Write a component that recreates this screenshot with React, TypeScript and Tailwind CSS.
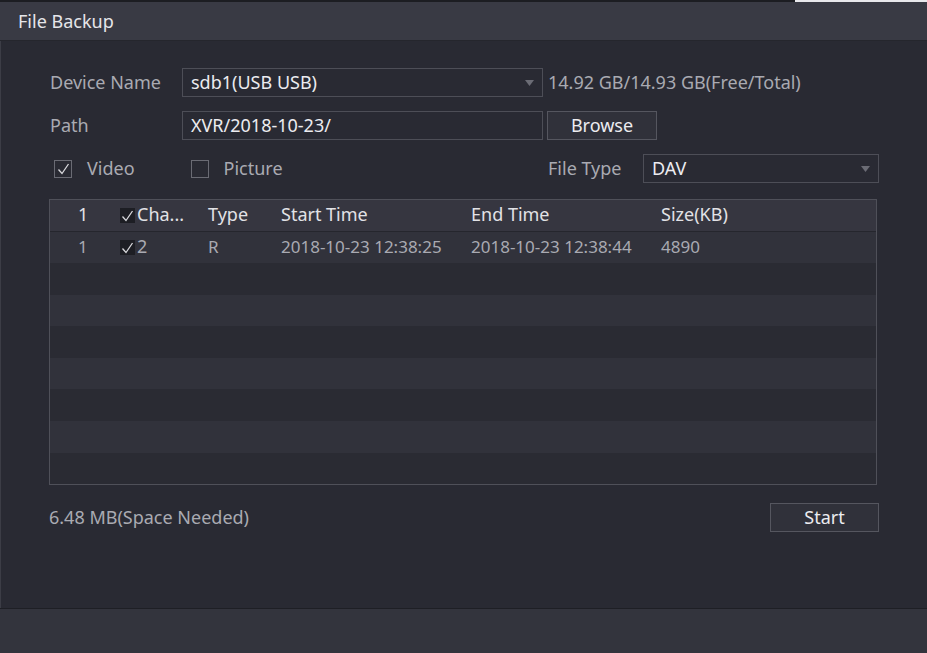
import React from "react";

const rows = [
  { no: "1", ch: "2", type: "R", start: "2018-10-23 12:38:25", end: "2018-10-23 12:38:44", size: "4890" },
];

function Arrow() {
  return (
    <svg width="9" height="6" viewBox="0 0 9 6" className="shrink-0">
      <path d="M0 0 L9 0 L4.5 6 Z" fill="#6b6c75" />
    </svg>
  );
}

function Tick({ className }: { className?: string }) {
  return (
    <svg width="13" height="12" viewBox="0 0 13 12" className={className}>
      <path d="M1.5 6.5 L5 10.5 L11.5 1" fill="none" stroke="#d8d8dc" strokeWidth="1.3" />
    </svg>
  );
}

function Checkbox({ checked }: { checked: boolean }) {
  return (
    <div className="w-[18px] h-[18px] border border-[#6a6b74] flex items-center justify-center">
      {checked && <Tick />}
    </div>
  );
}

function TableCheck() {
  return (
    <div className="w-[15px] h-[15px] bg-[#1d1e24] flex items-center justify-center mt-[2px]">
      <Tick />
    </div>
  );
}

export default function App() {
  const empty = Array.from({ length: 7 });

  return (
    <div
      className="w-[927px] h-[653px] bg-[#292a33] flex flex-col overflow-hidden text-[#a9aab2]"
      style={{ fontFamily: '"Noto Sans", "Open Sans", sans-serif' }}
    >
      {/* top edge */}
      <div className="h-[2px] flex">
        <div className="w-[795px] bg-[#1c1d22]" />
        <div className="flex-1 bg-[#e8e8ec]" />
      </div>

      {/* title */}
      <div className="h-[39px] bg-[#393a44] flex items-center pl-[18px] text-[18px] text-[#e6e6ea] border-b border-[#25262d]">
        File Backup
      </div>

      {/* body */}
      <div className="flex-1 flex flex-col border-l border-[#3c3d46] pl-[48px] pr-[48px] pt-[27px] text-[18px]">
        <div className="flex items-center h-[29px]">
          <div className="w-[133px] pl-[1px]">Device Name</div>
          <div className="w-[361px] h-[29px] border border-[#4d4e57] flex items-center justify-between pl-[8px] pr-[8px] text-[#ececf0]">
            <span>sdb1(USB USB)</span>
            <Arrow />
          </div>
          <div className="ml-[5px]">14.92 GB/14.93 GB(Free/Total)</div>
        </div>

        <div className="flex items-center h-[29px] mt-[14px]">
          <div className="w-[133px] pl-[1px]">Path</div>
          <div className="w-[361px] h-[29px] border border-[#4d4e57] flex items-center pl-[8px] text-[#ececf0]">
            XVR/2018-10-23/
          </div>
          <div className="ml-[4px] w-[110px] h-[29px] border border-[#55565f] bg-[#30313a] flex items-center justify-center text-[#ececf0]">
            Browse
          </div>
        </div>

        <div className="flex items-center h-[29px] mt-[14px]">
          <div className="w-[499px] flex items-center">
            <div className="ml-[5px]">
              <Checkbox checked />
            </div>
            <span className="ml-[15px]">Video</span>
            <div className="ml-[56px]">
              <Checkbox checked={false} />
            </div>
            <span className="ml-[15px]">Picture</span>
          </div>
          <span className="w-[95px]">File Type</span>
          <div className="w-[236px] h-[29px] border border-[#4d4e57] flex items-center justify-between pl-[8px] pr-[8px] text-[#ececf0]">
            <span>DAV</span>
            <Arrow />
          </div>
        </div>

        {/* table */}
        <div className="mt-[16px] w-[828px] border border-[#4f5059] text-[18px]">
          <div className="h-[32px] pb-[2px] bg-[#363640] flex items-center text-[#e2e2e6] border-b border-[#25262d]">
            <div className="w-[70px] pl-[28px]">1</div>
            <div className="w-[88px] flex items-center gap-[2px]">
              <TableCheck />
              <span>Cha...</span>
            </div>
            <div className="w-[73px]">Type</div>
            <div className="w-[190px]">Start Time</div>
            <div className="w-[190px]">End Time</div>
            <div>Size(KB)</div>
          </div>
          {rows.map((r, i) => (
            <div key={i} className="h-[31px] pb-[2px] bg-[#31323b] flex items-center text-[17px]">
              <div className="w-[70px] pl-[28px]">{r.no}</div>
              <div className="w-[88px] flex items-center gap-[2px]">
                <TableCheck />
                <span className="text-[18px]">{r.ch}</span>
              </div>
              <div className="w-[73px]">{r.type}</div>
              <div className="w-[190px]">{r.start}</div>
              <div className="w-[190px]">{r.end}</div>
              <div>{r.size}</div>
            </div>
          ))}
          {empty.map((_, i) => (
            <div key={i} className={`h-[31.6px] ${i % 2 === 0 ? "bg-[#2a2b33]" : "bg-[#31323b]"}`} />
          ))}
        </div>

        <div className="flex items-center justify-between mt-[18px] w-[830px]">
          <span>6.48 MB(Space Needed)</span>
          <div className="w-[109px] h-[29px] border border-[#55565f] bg-[#30313a] flex items-center justify-center text-[#ececf0]">
            Start
          </div>
        </div>
      </div>

      {/* footer */}
      <div className="h-[45px] bg-[#33343d] border-t border-[#1e1f25]" />
    </div>
  );
}
